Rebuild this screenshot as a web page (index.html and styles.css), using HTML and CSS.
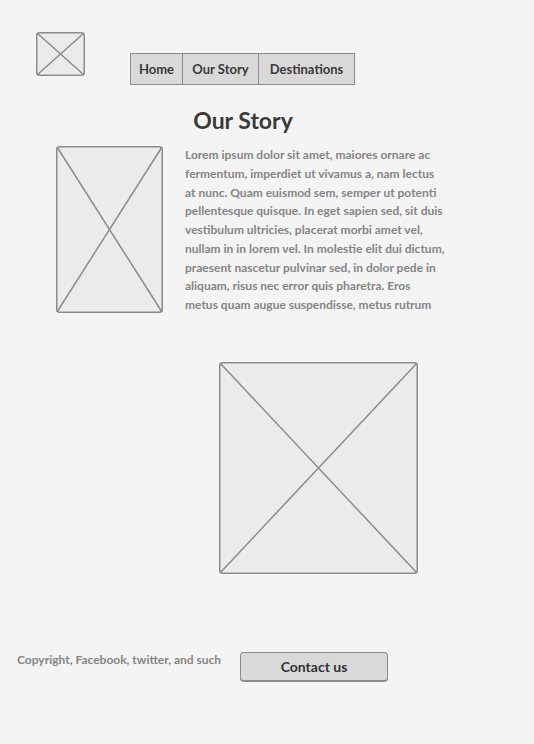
FILE: index.html
```html
<!DOCTYPE html>
<html>
<head>
<meta charset="utf-8">
<link rel="stylesheet" href="styles.css">
</head>
<body>
<header class="top">
  <svg class="ph logo" viewBox="0 0 49 44" preserveAspectRatio="none">
    <rect x="0.75" y="0.75" width="47.5" height="42.5" rx="3" />
    <line x1="1" y1="1" x2="48" y2="43" />
    <line x1="48" y1="1" x2="1" y2="43" />
  </svg>
  <nav class="nav">
    <a class="nav-item">Home</a>
    <a class="nav-item">Our Story</a>
    <a class="nav-item">Destinations</a>
  </nav>
</header>
<h1 class="title">Our Story</h1>
<section class="story">
  <svg class="ph side" viewBox="0 0 107 167" preserveAspectRatio="none">
    <rect x="0.75" y="0.75" width="105.5" height="165.5" rx="3" />
    <line x1="1" y1="1" x2="106" y2="166" />
    <line x1="106" y1="1" x2="1" y2="166" />
  </svg>
  <p class="text">Lorem ipsum dolor sit amet, maiores ornare ac fermentum, imperdiet ut vivamus a, nam lectus at nunc. Quam euismod sem, semper ut potenti pellentesque quisque. In eget sapien sed, sit duis vestibulum ultricies, placerat morbi amet vel, nullam in in lorem vel. In molestie elit dui dictum, praesent nascetur pulvinar sed, in dolor pede in aliquam, risus nec error quis pharetra. Eros metus quam augue suspendisse, metus rutrum</p>
</section>
<svg class="ph big" viewBox="0 0 199 212" preserveAspectRatio="none">
  <rect x="0.75" y="0.75" width="197.5" height="210.5" rx="3" />
  <line x1="1" y1="1" x2="198" y2="211" />
  <line x1="198" y1="1" x2="1" y2="211" />
</svg>
<footer class="foot">
  <span class="copy">Copyright, Facebook, twitter, and such</span>
  <button class="contact">Contact us</button>
</footer>
</body>
</html>
```
FILE: styles.css
```css
html, body {
  margin: 0;
  padding: 0;
  background: #f4f4f4;
  font-family: Lato, "Open Sans", sans-serif;
  width: 534px;
  height: 744px;
  overflow: hidden;
}
.ph {
  display: block;
}
.ph rect {
  fill: #ebebeb;
  stroke: #8c8c8c;
  stroke-width: 1.5;
  vector-effect: non-scaling-stroke;
}
.ph line {
  stroke: #8c8c8c;
  stroke-width: 1.5;
  vector-effect: non-scaling-stroke;
}
.top {
  display: flex;
  align-items: flex-start;
  padding: 32px 0 0 36px;
}
.logo {
  width: 49px;
  height: 44px;
  flex: none;
}
.nav {
  display: flex;
  margin: 21px 0 0 45px;
  border: 1.5px solid #8c8c8c;
  background: #d9d9d9;
  height: 30px;
}
.nav-item {
  display: flex;
  align-items: center;
  justify-content: center;
  font-size: 13px;
  font-weight: 700;
  color: #3a3a3a;
  border-left: 1.5px solid #8c8c8c;
}
.nav-item:first-child {
  border-left: none;
  width: 51px;
}
.nav-item:nth-child(2) {
  width: 75px;
}
.nav-item:nth-child(3) {
  width: 95px;
}
.title {
  margin: 20px 0 0 0;
  padding-left: 193px;
  width: 100px;
  text-align: center;
  font-size: 23px;
  line-height: 30px;
  font-weight: 700;
  color: #3a3a3a;
  white-space: nowrap;
}
.story {
  display: flex;
  align-items: flex-start;
  margin-top: 11px;
  padding-left: 56px;
}
.side {
  width: 107px;
  height: 167px;
  flex: none;
}
.text {
  margin: 0 0 0 22px;
  width: 260px;
  font-size: 12px;
  line-height: 18.75px;
  font-weight: 700;
  color: #858585;
}
.big {
  width: 199px;
  height: 212px;
  margin: 47px 0 0 219px;
}
.foot {
  display: flex;
  align-items: center;
  margin-top: 78px;
  padding-left: 17px;
}
.copy {
  font-size: 12px;
  font-weight: 700;
  color: #858585;
  width: 223px;
  margin-top: -14px;
}
.contact {
  width: 148px;
  height: 30px;
  background: #d9d9d9;
  border: 1.5px solid #8c8c8c;
  border-bottom-width: 2.5px;
  border-radius: 4px;
  font-family: Lato, "Open Sans", sans-serif;
  font-size: 14px;
  font-weight: 700;
  color: #333;
  padding: 0;
}
```
